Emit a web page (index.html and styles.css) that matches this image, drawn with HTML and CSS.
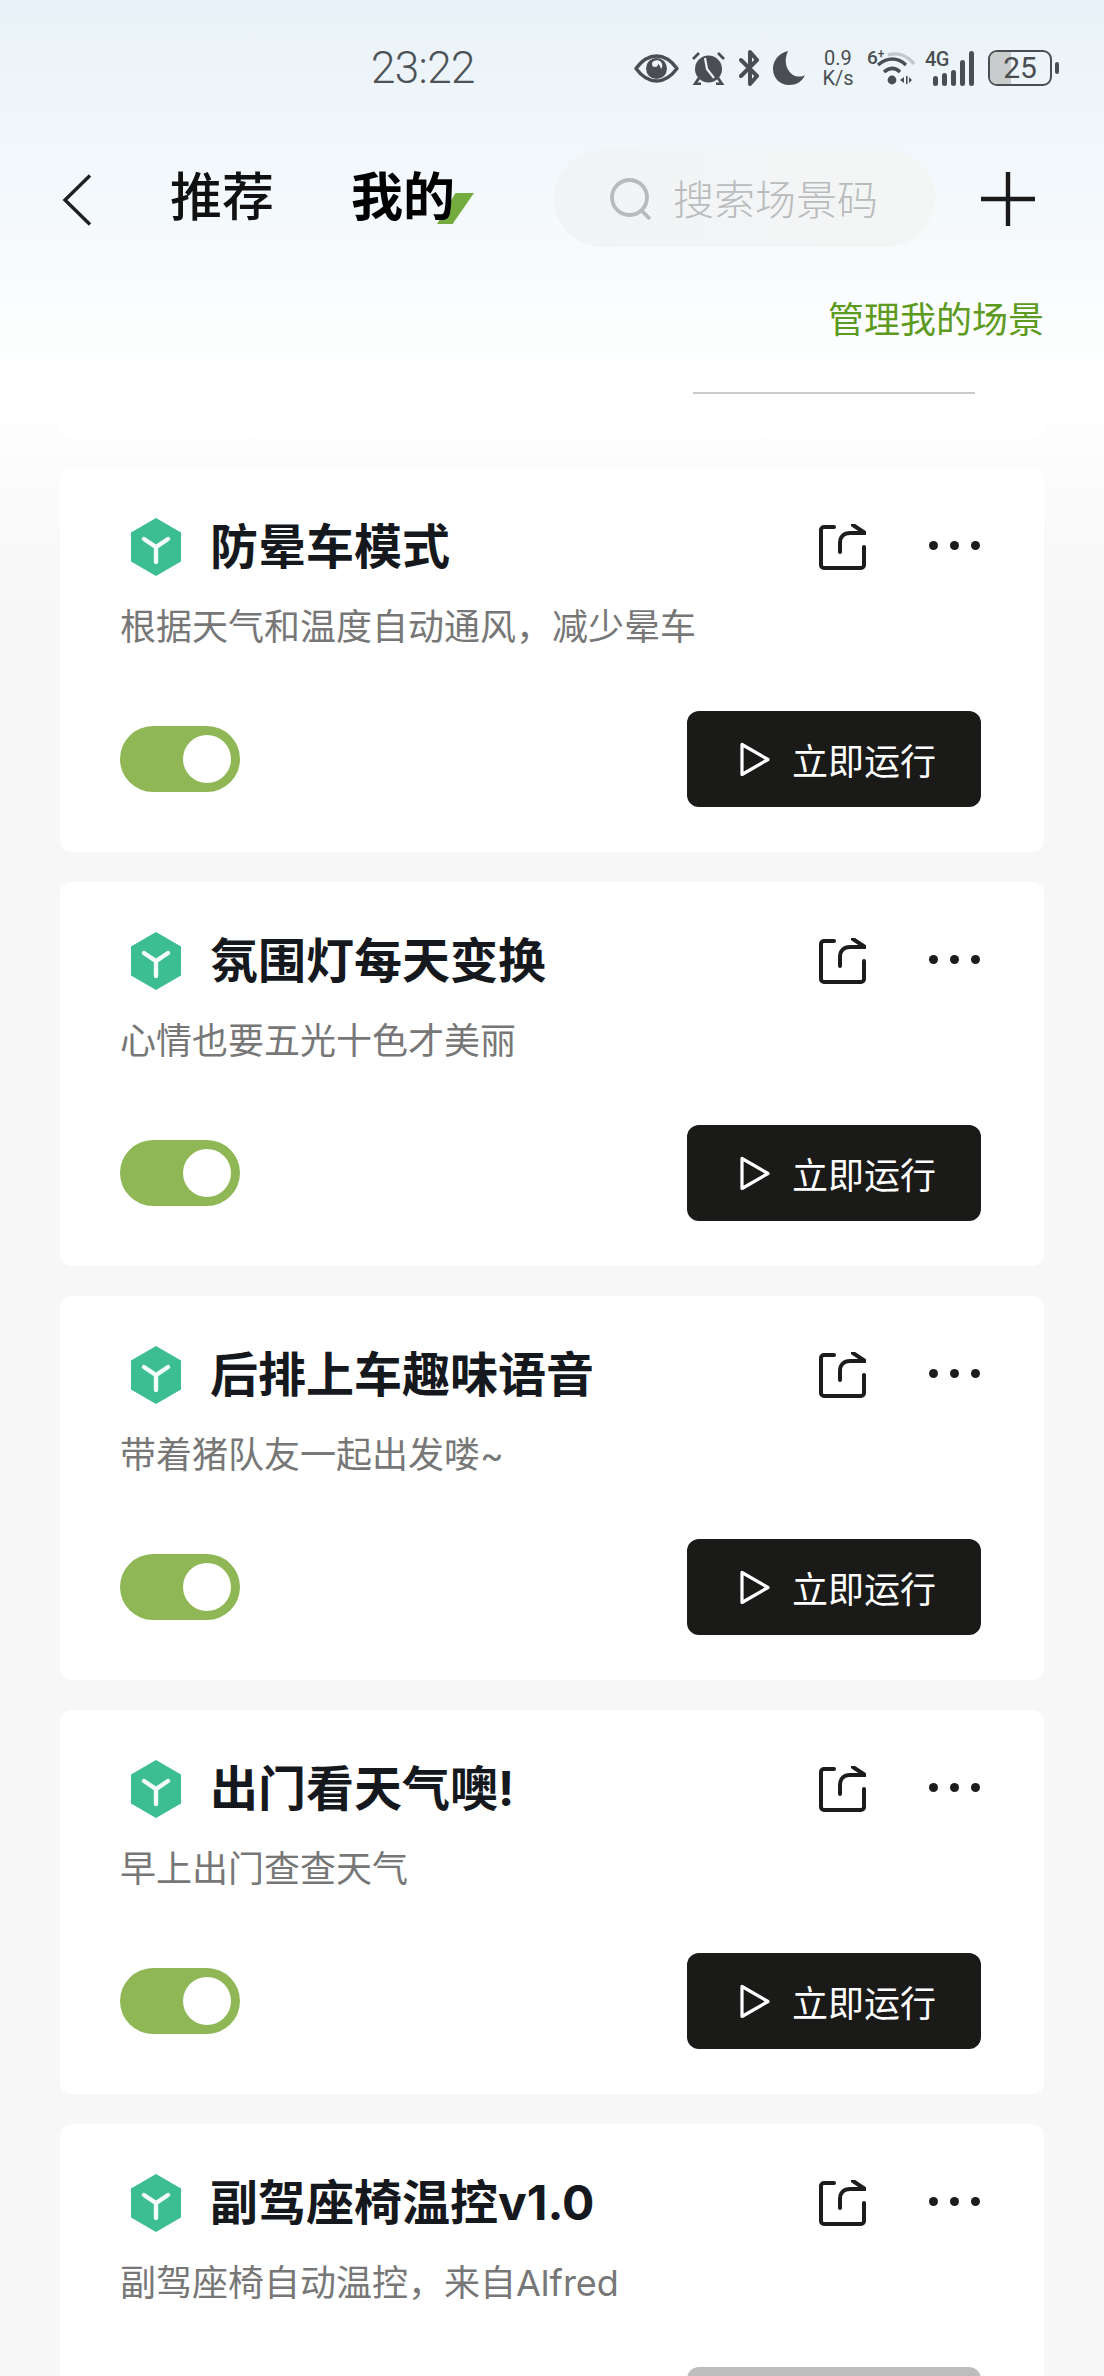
FILE: index.html
```html
<!DOCTYPE html>
<html lang="zh-CN">
<head>
<meta charset="utf-8">
<title>我的场景</title>
<link rel="stylesheet" href="styles.css">
</head>
<body>
<div class="page">
  <div class="status">
    <span class="time">23:22</span>
    <div class="status-icons">
      <svg class="si eye" viewBox="0 0 45 29"><path d="M2 14.500C9 5 15 2 22.500 2S36 5 43 14.500C36 24 30 27 22.500 27S9 24 2 14.500z" fill="none" stroke="#4a4e52" stroke-width="3.400" stroke-linejoin="round"/><circle cx="22.500" cy="14.500" r="10.500" fill="#4a4e52"/><path d="M19 8a8 8 0 0 1 8 7 5 5 0 0 0-8-7z" fill="#eef5fa"/><circle cx="21" cy="10" r="3" fill="#eef5fa"/></svg>
      <svg class="si alarm" viewBox="0 0 35 34"><circle cx="17.500" cy="18" r="13.500" fill="#4a4e52"/><path d="M2 8l6-6M33 8l-6-6M8 27l-4 6h6M27 27l4 6h-6" fill="none" stroke="#4a4e52" stroke-width="2.800"/><path d="M14 7l2 11 7 9" fill="none" stroke="#eef5fa" stroke-width="2.200"/></svg>
      <svg class="si bt" viewBox="0 0 21 36"><path d="M2 10l16 16-7 8V2l7 8L2 26" fill="none" stroke="#4a4e52" stroke-width="4" stroke-linejoin="round" stroke-linecap="round"/></svg>
      <svg class="si moon" viewBox="0 0 32 34"><path d="M15 0C6 2 0 9 0 18c0 9 7 16 16 16 7 0 13-3 16-10-3 2-8 2-12 0C14 20 10 11 15 0z" fill="#4a4e52"/></svg>
      <div class="speed"><span>0.9</span><span>K/s</span></div>
      <div class="wifi">
        <span class="wifi-tag">6<sup>+</sup></span>
        <svg class="si wifi-arcs" viewBox="0 0 40 34"><path d="M13 3c9-3 19 0 26 9" fill="none" stroke="#c4c7c9" stroke-width="3.400"/><path d="M3 13c10-8 19-8 28 0" fill="none" stroke="#4a4e52" stroke-width="3.400"/><path d="M9 20c6-5 11-5 16 0" fill="none" stroke="#4a4e52" stroke-width="3.400"/><circle cx="17" cy="28" r="4.400" fill="#4a4e52"/><path d="M25 28l4-3v6zM31 24h1.600v8H31zM34 25l3 3-3 3z" fill="#4a4e52"/></svg>
      </div>
      <div class="cell">
        <span class="cell-tag">4G</span>
        <div class="bars"><i class="b1"></i><i class="b2"></i><i class="b3"></i><i class="b4"></i><i class="b5"></i></div>
      </div>
      <div class="battery"><span class="batt-body"><span class="batt-fill"></span><span class="batt-num">25</span></span><i class="batt-tip"></i></div>
    </div>
  </div>

  <div class="nav">
    <svg class="back" viewBox="0 0 30 52"><path d="M28 1.500L3 26l25 24.500" fill="none" stroke="#1f1f1f" stroke-width="3.400"/></svg>
    <span class="tab">推荐</span>
    <span class="tab tab-on">我的<i class="tab-mark"></i></span>
    <div class="search">
      <svg class="search-ico" viewBox="0 0 42 42"><circle cx="19.500" cy="19.500" r="17.500" fill="none" stroke="#b8babb" stroke-width="3.800"/><path d="M31 32l9 9" stroke="#b8babb" stroke-width="3.800"/></svg>
      <span>搜索场景码</span>
    </div>
    <svg class="plus" viewBox="0 0 54 54"><path d="M27 0v54M0 27h54" stroke="#1a1a1a" stroke-width="4.400"/></svg>
  </div>

  <div class="manage">管理我的场景</div>

  <div class="list">
    <div class="stub"><i class="stub-line"></i></div>

    <div class="card">
      <div class="head">
        <svg class="hex" viewBox="0 0 50 58"><path d="M25 0l25 14.500v29L25 58 0 43.500v-29z" fill="#3dbd92"/><path d="M13 21l12 8 12-8M25 29v15" fill="none" stroke="#f2fbf8" stroke-width="4.400" stroke-linecap="round"/></svg>
        <h2>防晕车模式</h2>
        <svg class="share" viewBox="0 0 48 47"><path d="M16 3H6a3 3 0 0 0-3 3v35a3 3 0 0 0 3 3h37a3 3 0 0 0 3-3V23" fill="none" stroke="#1c1c1c" stroke-width="4" stroke-linecap="round"/><path d="M22 28V19c0-6 4-10 10-10h15L35 1" fill="none" stroke="#1c1c1c" stroke-width="4" stroke-linecap="round" stroke-linejoin="round"/></svg>
        <div class="more"><i></i><i></i><i></i></div>
      </div>
      <p class="desc">根据天气和温度自动通风，减少晕车</p>
      <div class="foot">
        <div class="toggle"><i></i></div>
        <div class="run"><svg class="play" viewBox="0 0 30 35"><path d="M2 2.500v30l26-15z" fill="none" stroke="#fff" stroke-width="3.200" stroke-linejoin="round"/></svg><span>立即运行</span></div>
      </div>
    </div>

    <div class="card">
      <div class="head">
        <svg class="hex" viewBox="0 0 50 58"><path d="M25 0l25 14.500v29L25 58 0 43.500v-29z" fill="#3dbd92"/><path d="M13 21l12 8 12-8M25 29v15" fill="none" stroke="#f2fbf8" stroke-width="4.400" stroke-linecap="round"/></svg>
        <h2>氛围灯每天变换</h2>
        <svg class="share" viewBox="0 0 48 47"><path d="M16 3H6a3 3 0 0 0-3 3v35a3 3 0 0 0 3 3h37a3 3 0 0 0 3-3V23" fill="none" stroke="#1c1c1c" stroke-width="4" stroke-linecap="round"/><path d="M22 28V19c0-6 4-10 10-10h15L35 1" fill="none" stroke="#1c1c1c" stroke-width="4" stroke-linecap="round" stroke-linejoin="round"/></svg>
        <div class="more"><i></i><i></i><i></i></div>
      </div>
      <p class="desc">心情也要五光十色才美丽</p>
      <div class="foot">
        <div class="toggle"><i></i></div>
        <div class="run"><svg class="play" viewBox="0 0 30 35"><path d="M2 2.500v30l26-15z" fill="none" stroke="#fff" stroke-width="3.200" stroke-linejoin="round"/></svg><span>立即运行</span></div>
      </div>
    </div>

    <div class="card">
      <div class="head">
        <svg class="hex" viewBox="0 0 50 58"><path d="M25 0l25 14.500v29L25 58 0 43.500v-29z" fill="#3dbd92"/><path d="M13 21l12 8 12-8M25 29v15" fill="none" stroke="#f2fbf8" stroke-width="4.400" stroke-linecap="round"/></svg>
        <h2>后排上车趣味语音</h2>
        <svg class="share" viewBox="0 0 48 47"><path d="M16 3H6a3 3 0 0 0-3 3v35a3 3 0 0 0 3 3h37a3 3 0 0 0 3-3V23" fill="none" stroke="#1c1c1c" stroke-width="4" stroke-linecap="round"/><path d="M22 28V19c0-6 4-10 10-10h15L35 1" fill="none" stroke="#1c1c1c" stroke-width="4" stroke-linecap="round" stroke-linejoin="round"/></svg>
        <div class="more"><i></i><i></i><i></i></div>
      </div>
      <p class="desc">带着猪队友一起出发喽~</p>
      <div class="foot">
        <div class="toggle"><i></i></div>
        <div class="run"><svg class="play" viewBox="0 0 30 35"><path d="M2 2.500v30l26-15z" fill="none" stroke="#fff" stroke-width="3.200" stroke-linejoin="round"/></svg><span>立即运行</span></div>
      </div>
    </div>

    <div class="card">
      <div class="head">
        <svg class="hex" viewBox="0 0 50 58"><path d="M25 0l25 14.500v29L25 58 0 43.500v-29z" fill="#3dbd92"/><path d="M13 21l12 8 12-8M25 29v15" fill="none" stroke="#f2fbf8" stroke-width="4.400" stroke-linecap="round"/></svg>
        <h2>出门看天气噢!</h2>
        <svg class="share" viewBox="0 0 48 47"><path d="M16 3H6a3 3 0 0 0-3 3v35a3 3 0 0 0 3 3h37a3 3 0 0 0 3-3V23" fill="none" stroke="#1c1c1c" stroke-width="4" stroke-linecap="round"/><path d="M22 28V19c0-6 4-10 10-10h15L35 1" fill="none" stroke="#1c1c1c" stroke-width="4" stroke-linecap="round" stroke-linejoin="round"/></svg>
        <div class="more"><i></i><i></i><i></i></div>
      </div>
      <p class="desc">早上出门查查天气</p>
      <div class="foot">
        <div class="toggle"><i></i></div>
        <div class="run"><svg class="play" viewBox="0 0 30 35"><path d="M2 2.500v30l26-15z" fill="none" stroke="#fff" stroke-width="3.200" stroke-linejoin="round"/></svg><span>立即运行</span></div>
      </div>
    </div>

    <div class="card">
      <div class="head">
        <svg class="hex" viewBox="0 0 50 58"><path d="M25 0l25 14.500v29L25 58 0 43.500v-29z" fill="#3dbd92"/><path d="M13 21l12 8 12-8M25 29v15" fill="none" stroke="#f2fbf8" stroke-width="4.400" stroke-linecap="round"/></svg>
        <h2>副驾座椅温控v1.0</h2>
        <svg class="share" viewBox="0 0 48 47"><path d="M16 3H6a3 3 0 0 0-3 3v35a3 3 0 0 0 3 3h37a3 3 0 0 0 3-3V23" fill="none" stroke="#1c1c1c" stroke-width="4" stroke-linecap="round"/><path d="M22 28V19c0-6 4-10 10-10h15L35 1" fill="none" stroke="#1c1c1c" stroke-width="4" stroke-linecap="round" stroke-linejoin="round"/></svg>
        <div class="more"><i></i><i></i><i></i></div>
      </div>
      <p class="desc">副驾座椅自动温控，来自Alfred</p>
      <div class="foot">
        <div class="toggle toggle-off"><i></i></div>
        <div class="run run-off"></div>
      </div>
    </div>
  </div>
</div>
</body>
</html>
```
FILE: styles.css
```css
* { box-sizing: border-box; }
html, body { margin: 0; padding: 0; }
body {
  width: 1104px;
  height: 2376px;
  overflow: hidden;
  font-family: "Inter", "Noto Sans CJK SC", sans-serif;
}
.page {
  height: 2376px;
  overflow: hidden;
  background: linear-gradient(180deg, #e9f2f8 0, #eff6fa 110px, #f4f9fc 210px, #fbfdfe 310px, #ffffff 400px, #fbfbfb 480px, #f7f7f7 620px);
}
.status {
  height: 100px;
  padding: 43px 0 0 371px;
  display: flex;
  color: #4a4e52;
}
.time {
  font-family: "Roboto", sans-serif;
  font-weight: 300;
  font-size: 44px;
  line-height: 50px;
  height: 50px;
  letter-spacing: -0.6px;
  color: #4c5358;
  width: 263px;
  flex: none;
}
.status-icons { display: flex; align-items: center; height: 50px; }
.si { display: block; flex: none; }
.eye { width: 45px; height: 29px; margin-right: 12px; }
.alarm { width: 35px; height: 34px; margin-right: 13px; }
.bt { width: 21px; height: 36px; margin-right: 13px; }
.moon { width: 32px; height: 34px; margin-right: 16px; }
.speed { display: flex; flex-direction: column; width: 34px; margin-right: 12px; font-family: "Roboto", sans-serif; font-size: 20px; line-height: 20px; text-align: center; }
.wifi { display: flex; width: 48px; height: 36px; margin-right: 10px; position: relative; }
.wifi-tag { font-family: "Roboto", sans-serif; font-weight: 500; font-size: 19px; line-height: 20px; position: absolute; left: 0; top: -2px; }
.wifi-tag sup { font-size: 12px; line-height: 0; vertical-align: 6px; }
.wifi-arcs { width: 40px; height: 34px; margin: 2px 0 0 8px; }
.cell { display: flex; width: 50px; height: 36px; position: relative; margin-right: 13px; }
.cell-tag { font-family: "Roboto", sans-serif; font-weight: 500; font-size: 20px; line-height: 20px; letter-spacing: -0.5px; position: absolute; left: 0; top: -1px; }
.bars { display: flex; align-items: flex-end; gap: 4px; position: absolute; left: 8px; bottom: 0; }
.bars i { display: block; width: 5px; border-radius: 2.500px; background: #4a4e52; }
.b1 { height: 10px; }
.b2 { height: 13px; }
.b3 { height: 16px; }
.b4 { height: 26px; }
.b5 { height: 35px; }
.battery { display: flex; align-items: center; gap: 3px; }
.batt-body { position: relative; display: block; width: 64px; height: 36px; border: 2.600px solid #4a4e52; border-radius: 9px; overflow: hidden; text-align: center; }
.batt-fill { position: absolute; left: 0; top: 0; bottom: 0; width: 21px; background: #c9cccd; }
.batt-num { position: relative; font-family: "Roboto", sans-serif; font-size: 30px; line-height: 31px; font-weight: 400; display: block; }
.batt-tip { display: block; width: 4px; height: 12px; border-radius: 2px; background: #4a4e52; }

.nav { height: 147px; padding-top: 50px; display: flex; align-items: flex-start; }
.back { width: 30px; height: 52px; margin: 24px 0 0 62px; flex: none; }
.tab { font-size: 52px; line-height: 60px; margin: 18px 0 0 78px; color: #111; font-weight: 500; position: relative; width: 104px; white-space: nowrap; flex: none; }
.tab-on { margin-left: 77px; font-weight: 700; color: #000; z-index: 1; }
.tab-mark { position: absolute; left: 86px; top: 25px; width: 37px; height: 31px; background: #74ab3e; clip-path: polygon(50% 0, 100% 0, 42% 100%, 0 100%); z-index: -1; }
.search { width: 381px; height: 97px; margin-left: 99px; border-radius: 48px; background: linear-gradient(90deg, #f1f4f6, #f4f5f5); display: flex; align-items: center; padding-left: 56px; color: #b9bbbc; font-size: 41px; font-weight: 300; flex: none; }
.search span { margin-left: 21px; margin-top: -4px; white-space: nowrap; }
.search-ico { width: 42px; height: 42px; flex: none; }
.plus { width: 54px; height: 54px; margin: 22px 0 0 46px; flex: none; }

.manage { height: 143px; padding: 48px 60px 0 0; text-align: right; color: #5c9a20; font-size: 36px; line-height: 50px; }

.list { padding: 0 60px; display: flex; flex-direction: column; gap: 30px; }
.stub { height: 48px; background: #fff; border-radius: 0 0 12px 12px; display: flex; justify-content: flex-end; padding-right: 69px; flex: none; }
.stub-line { display: block; width: 282px; height: 2px; background: #c9cbcc; margin-top: 2px; }
.card { height: 384px; background: #fff; border-radius: 12px; padding: 50px 63px 0 60px; flex: none; }
.head { display: flex; align-items: center; height: 58px; }
.hex { width: 50px; height: 58px; margin-left: 11px; flex: none; }
h2 { margin: 0 0 0 29px; font-size: 48px; line-height: 58px; font-weight: 700; color: #15181d; flex: 1; white-space: nowrap; }
.share { width: 48px; height: 47px; flex: none; margin-right: 63px; }
.more { display: flex; gap: 12px; width: 52px; margin-top: -4px; flex: none; }
.more i { display: block; width: 9px; height: 9px; border-radius: 50%; background: #1c1c1c; }
.desc { margin: 26px 0 0; font-size: 36px; line-height: 50px; color: #777; font-weight: 400; white-space: nowrap; }
.foot { display: flex; justify-content: space-between; align-items: center; margin-top: 59px; height: 96px; }
.toggle { width: 120px; height: 66px; border-radius: 33px; background: #8fb755; padding: 9px 0 0 63px; }
.toggle i { display: block; width: 48px; height: 48px; border-radius: 50%; background: #fff; }
.toggle-off { background: #ccc; }
.run { width: 294px; height: 96px; border-radius: 12px; background: #1a1a18; color: #fff; display: flex; align-items: center; justify-content: center; padding-left: 8px; font-size: 36px; }
.run span { margin-left: 22px; white-space: nowrap; }
.play { width: 30px; height: 35px; flex: none; }
.run-off { background: #bdbdbd; }
```
